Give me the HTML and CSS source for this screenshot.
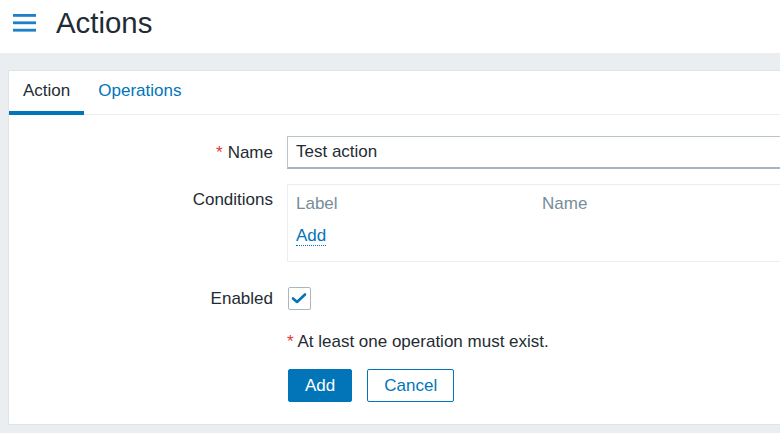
FILE: index.html
```html
<!DOCTYPE html>
<html lang="en">
<head>
<meta charset="utf-8">
<title>Actions</title>
<link rel="stylesheet" href="styles.css">
</head>
<body>
<header class="page-header">
  <button class="menu-btn" type="button" aria-label="Menu">
    <svg width="23" height="18" viewBox="0 0 23 18" aria-hidden="true">
      <rect x="0" y="0" width="23" height="2.8" fill="#1c81c6"/>
      <rect x="0" y="7.4" width="23" height="2.8" fill="#1c81c6"/>
      <rect x="0" y="14.8" width="23" height="2.8" fill="#1c81c6"/>
    </svg>
  </button>
  <h1 class="page-title">Actions</h1>
</header>
<main class="content">
  <section class="panel">
    <nav class="tabs">
      <a class="tab tab-active">Action</a>
      <a class="tab">Operations</a>
    </nav>
    <form class="form">
      <div class="row row-name">
        <label class="row-label"><span class="req">*</span>Name</label>
        <div class="row-field"><input class="text-input" type="text" value="Test action"></div>
      </div>
      <div class="row row-conditions">
        <label class="row-label label-top">Conditions</label>
        <div class="row-field">
          <div class="cond-box">
            <div class="cond-head">
              <span>Label</span>
              <span>Name</span>
            </div>
            <div class="cond-add"><a class="link">Add</a></div>
          </div>
        </div>
      </div>
      <div class="row row-enabled">
        <label class="row-label">Enabled</label>
        <div class="row-field">
          <span class="checkbox">
            <svg width="23" height="23" viewBox="0 0 23 23" aria-hidden="true">
              <polyline points="5,11.5 9,15 17,7.5" fill="none" stroke="#0275b8" stroke-width="2.6" stroke-linecap="round" stroke-linejoin="round"/>
            </svg>
          </span>
        </div>
      </div>
      <div class="row row-message">
        <div class="row-label"></div>
        <div class="row-field"><span class="req-msg">*</span> At least one operation must exist.</div>
      </div>
      <div class="row row-buttons">
        <div class="row-label"></div>
        <div class="row-field buttons">
          <button class="btn btn-primary" type="button">Add</button>
          <button class="btn btn-alt" type="button">Cancel</button>
        </div>
      </div>
    </form>
  </section>
</main>
</body>
</html>
```
FILE: styles.css
```css
* { box-sizing: border-box; }

html, body {
  margin: 0;
  padding: 0;
  height: 100%;
}

body {
  font-family: "Liberation Sans", Arial, sans-serif;
  font-size: 17px;
  color: #1f2c33;
  background: #ebeef0;
  overflow: hidden;
}

.page-header {
  height: 53px;
  background: #ffffff;
  display: flex;
  align-items: center;
  padding: 0 0 0 13px;
}

.menu-btn {
  border: 0;
  background: none;
  padding: 0;
  margin: -7px 20px 0 0;
  width: 23px;
  height: 18px;
  display: flex;
}

.page-title {
  margin: -7px 0 0 0;
  font-size: 29.4px;
  font-weight: normal;
  line-height: 34px;
  color: #1f2c33;
}

.content {
  padding: 17px 0 9px 8px;
}

.panel {
  width: 1000px;
  background: #ffffff;
  border: 1px solid #dfe4e7;
}

.tabs {
  display: flex;
  border-bottom: 1px solid #ebeef0;
}

.tab {
  height: 44px;
  line-height: 40px;
  padding: 0 14px;
  margin-bottom: -1px;
  border-bottom: 4px solid transparent;
  color: #0275b8;
  cursor: pointer;
}

.tab-active {
  color: #1f2c33;
  border-bottom-color: #0275b8;
}

.form {
  padding: 21px 0 22px 0;
}

.row {
  display: grid;
  grid-template-columns: 264px 1fr;
  column-gap: 14px;
  align-items: center;
}

.row-label {
  text-align: right;
  line-height: 20px;
}

.label-top {
  align-self: start;
  padding-top: 6px;
}

.req {
  color: #e33734;
  margin-right: 5px;
}

.row-conditions { margin-top: 15px; }
.row-enabled { margin-top: 25px; }
.row-message { margin-top: 22px; line-height: 20px; }
.row-buttons { margin-top: 17px; }

.text-input {
  width: 560px;
  height: 33px;
  border: 1px solid #b9c5cc;
  border-bottom: 2px solid #a7b6bf;
  padding: 0 8px;
  font-family: inherit;
  font-size: 17px;
  color: #1f2c33;
  background: #ffffff;
  outline: none;
}

.cond-box {
  width: 560px;
  height: 78px;
  border: 1px solid #ebeef0;
  padding: 9px 8px 0 8px;
}

.cond-head {
  display: grid;
  grid-template-columns: 246px 1fr;
  line-height: 20px;
  color: #768d99;
}

.cond-add {
  margin-top: 12px;
  line-height: 20px;
}

.link {
  color: #0275b8;
  border-bottom: 1px dotted #0275b8;
  cursor: pointer;
}

.checkbox {
  display: block;
  width: 23px;
  height: 23px;
  border: 1px solid #a7b6bf;
  border-radius: 2px;
  margin-left: 1px;
}

.checkbox svg {
  display: block;
  margin: -1px 0 0 -1px;
}

.req-msg {
  color: #e33734;
}

.buttons {
  display: flex;
  gap: 15px;
  padding-left: 1px;
}

.btn {
  height: 33px;
  padding: 0 16px;
  font-family: inherit;
  font-size: 17px;
  border: 1px solid #0275b8;
  border-radius: 2px;
  cursor: pointer;
}

.btn-primary {
  background: #0275b8;
  color: #ffffff;
}

.btn-alt {
  background: #ffffff;
  color: #0275b8;
}
```
